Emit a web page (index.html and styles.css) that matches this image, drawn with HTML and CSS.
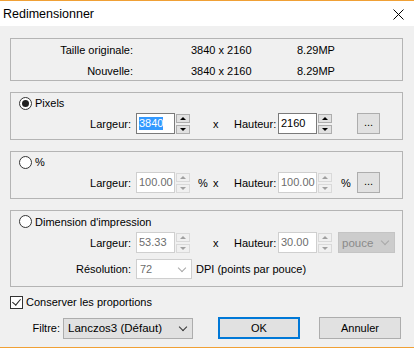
FILE: index.html
```html
<!DOCTYPE html>
<html lang="fr">
<head>
    <meta charset="UTF-8">
    <title>Redimensionner</title>
    <link rel="stylesheet" href="styles.css">
</head>
<body>
<div class="window">
    <div class="titlebar">
        <span class="title">Redimensionner</span>
        <svg class="close" width="11" height="11" viewBox="0 0 11 11"><path d="M0.5 0.5L10.5 10.5M10.5 0.5L0.5 10.5" stroke="#000" stroke-width="1"/></svg>
    </div>

    <div class="content">
        <!-- tailles -->
        <div class="group info">
            <div class="info-row">
                <span class="info-lbl">Taille originale:</span>
                <span class="info-size">3840 x 2160</span>
                <span>8.29MP</span>
            </div>
            <div class="info-row">
                <span class="info-lbl">Nouvelle:</span>
                <span class="info-size">3840 x 2160</span>
                <span>8.29MP</span>
            </div>
        </div>

        <!-- pixels -->
        <div class="group">
            <div class="head"><span class="radio checked"></span>Pixels</div>
            <div class="row">
                <span class="lbl">Largeur:</span>
                <span class="num"><span class="sel">3840</span></span>
                <span class="spin"><span class="up"></span><span class="down"></span></span>
                <span class="unit"></span>
                <span class="times">x</span>
                <span class="lbl2">Hauteur:</span>
                <span class="num">2160</span>
                <span class="spin"><span class="up"></span><span class="down"></span></span>
                <span class="unit2"></span>
                <span class="dots">...</span>
            </div>
        </div>

        <!-- pourcentage -->
        <div class="group">
            <div class="head"><span class="radio"></span>%</div>
            <div class="row">
                <span class="lbl">Largeur:</span>
                <span class="num off">100.00</span>
                <span class="spin off"><span class="up"></span><span class="down"></span></span>
                <span class="unit">%</span>
                <span class="times">x</span>
                <span class="lbl2">Hauteur:</span>
                <span class="num off">100.00</span>
                <span class="spin off"><span class="up"></span><span class="down"></span></span>
                <span class="unit2">%</span>
                <span class="dots">...</span>
            </div>
        </div>

        <!-- impression -->
        <div class="group print">
            <div class="head"><span class="radio"></span>Dimension d'impression</div>
            <div class="row">
                <span class="lbl">Largeur:</span>
                <span class="num off">53.33</span>
                <span class="spin off"><span class="up"></span><span class="down"></span></span>
                <span class="unit"></span>
                <span class="times">x</span>
                <span class="lbl2">Hauteur:</span>
                <span class="num off">30.00</span>
                <span class="spin off"><span class="up"></span><span class="down"></span></span>
                <span class="combo grey">pouce<span class="arrow"></span></span>
            </div>
            <div class="row res">
                <span class="lbl">Résolution:</span>
                <span class="combo small">72<span class="arrow"></span></span>
                <span class="dpi">DPI (points par pouce)</span>
            </div>
        </div>

        <div class="check-row"><span class="check"></span>Conserver les proportions</div>

        <div class="bottom">
            <span class="filtre-lbl">Filtre:</span>
            <span class="combo filtre">Lanczos3 (Défaut)<span class="arrow dark"></span></span>
            <span class="btn ok">OK</span>
            <span class="btn">Annuler</span>
        </div>
    </div>
</div>
</body>
</html>
```

FILE: styles.css
```css
body {
    margin: 0;
    font-family: "Liberation Sans", Arial, sans-serif;
    font-size: 11px;
    color: #000;
}
.window {
    width: 414px;
    height: 348px;
    box-sizing: border-box;
    border-top: 1px solid #f0a035;
    border-bottom: 1px solid #f0a035;
    background: #f0f0f0;
}
.titlebar {
    height: 25px;
    background: #fff;
    display: flex;
    align-items: center;
    justify-content: space-between;
    padding: 0 10px 0 3px;
}
.title {
    font-size: 12.5px;
}
.close {
    margin-top: 1px;
}
.content {
    padding: 12px 11px 0 10px;
}
.group {
    border: 1px solid #b4b4b4;
    margin-bottom: 11px;
}
.info {
    height: 41px;
}
.info-row {
    display: flex;
    align-items: center;
    height: 21px;
}
.info-lbl {
    width: 122px;
    text-align: right;
}
.info-size {
    margin-left: 58px;
    width: 106px;
}
.head {
    display: flex;
    align-items: center;
    height: 20px;
    padding-left: 8px;
}
.radio {
    width: 11px;
    height: 11px;
    border: 1px solid #333;
    border-radius: 50%;
    background: #fff;
    margin-right: 3px;
    position: relative;
}
.radio.checked::after {
    content: "";
    position: absolute;
    left: 2px;
    top: 2px;
    width: 7px;
    height: 7px;
    border-radius: 50%;
    background: #222;
}
.row {
    display: flex;
    align-items: center;
    height: 21px;
    padding-bottom: 5px;
}
.lbl {
    width: 120px;
    text-align: right;
    margin-right: 5px;
}
.num {
    width: 39px;
    height: 21px;
    box-sizing: border-box;
    border: 1px solid #7a7a7a;
    background: #fff;
    padding: 0 1px 0 2px;
    display: flex;
    align-items: center;
    line-height: 13px;
    overflow: hidden;
    white-space: nowrap;
}
.num.off {
    border-color: #cfcfcf;
    color: #6d6d6d;
}
.sel {
    background: #3399ff;
    color: #fff;
}
.spin {
    margin-left: 1px;
    width: 14px;
    display: flex;
    flex-direction: column;
    gap: 2px;
}
.spin span {
    height: 9px;
    box-sizing: border-box;
    border: 1px solid #adadad;
    background: #e1e1e1;
    position: relative;
}
.spin .up::after,
.spin .down::after {
    content: "";
    position: absolute;
    left: 3px;
    border-left: 3px solid transparent;
    border-right: 3px solid transparent;
}
.spin .up::after {
    top: 2px;
    border-bottom: 3px solid #000;
}
.spin .down::after {
    top: 2px;
    border-top: 3px solid #000;
}
.spin.off span {
    border-color: #d9d9d9;
    background: #f0f0f0;
}
.spin.off .up::after {
    border-bottom-color: #a0a0a0;
}
.spin.off .down::after {
    border-top-color: #a0a0a0;
}
.unit {
    width: 15px;
    padding-left: 8px;
}
.times {
    width: 21px;
}
.lbl2 {
    width: 41px;
    margin-right: 3px;
}
.unit2 {
    width: 16px;
    padding-left: 9px;
}
.dots {
    width: 23px;
    height: 21px;
    box-sizing: border-box;
    border: 1px solid #adadad;
    background: #e1e1e1;
    text-align: center;
    line-height: 17px;
}
.combo {
    height: 20px;
    box-sizing: border-box;
    border: 1px solid #cfcfcf;
    background: #fff;
    color: #6d6d6d;
    display: flex;
    align-items: center;
    padding-left: 3px;
    position: relative;
}
.combo.grey {
    margin-left: 6px;
    width: 57px;
    height: 21px;
    background: #cccccc;
    border-color: #c4c4c4;
    color: #8a8a8a;
    font-size: 11.5px;
}
.combo.small {
    width: 56px;
}
.arrow {
    position: absolute;
    right: 6px;
    top: 5px;
    width: 5px;
    height: 5px;
    border-right: 1px solid #a8a8a8;
    border-bottom: 1px solid #a8a8a8;
    transform: rotate(45deg);
}
.arrow.dark {
    border-color: #333;
}
.print .head {
    height: 21px;
}
.res {
    padding-bottom: 7px;
}
.dpi {
    margin-left: 4px;
}
.check-row {
    display: flex;
    align-items: center;
    height: 20px;
    margin-top: -6px;
}
.check {
    width: 11px;
    height: 11px;
    border: 1px solid #333;
    background: #fff;
    margin-right: 3px;
    position: relative;
}
.check::after {
    content: "";
    position: absolute;
    left: 3px;
    top: 0px;
    width: 4px;
    height: 7px;
    border-right: 1px solid #222;
    border-bottom: 1px solid #222;
    transform: rotate(40deg);
}
.bottom {
    display: flex;
    align-items: center;
    margin-top: 5px;
    height: 22px;
}
.filtre-lbl {
    width: 50px;
    text-align: right;
    margin-right: 3px;
}
.combo.filtre {
    width: 130px;
    height: 21px;
    border-color: #adadad;
    background: #e1e1e1;
    color: #000;
    padding-left: 4px;
    font-size: 11.5px;
}
.btn {
    width: 82px;
    height: 22px;
    box-sizing: border-box;
    border: 1px solid #adadad;
    background: #e1e1e1;
    display: flex;
    align-items: center;
    justify-content: center;
    margin-left: 19px;
}
.btn.ok {
    margin-left: 25px;
    border: 2px solid #0078d7;
}
```
